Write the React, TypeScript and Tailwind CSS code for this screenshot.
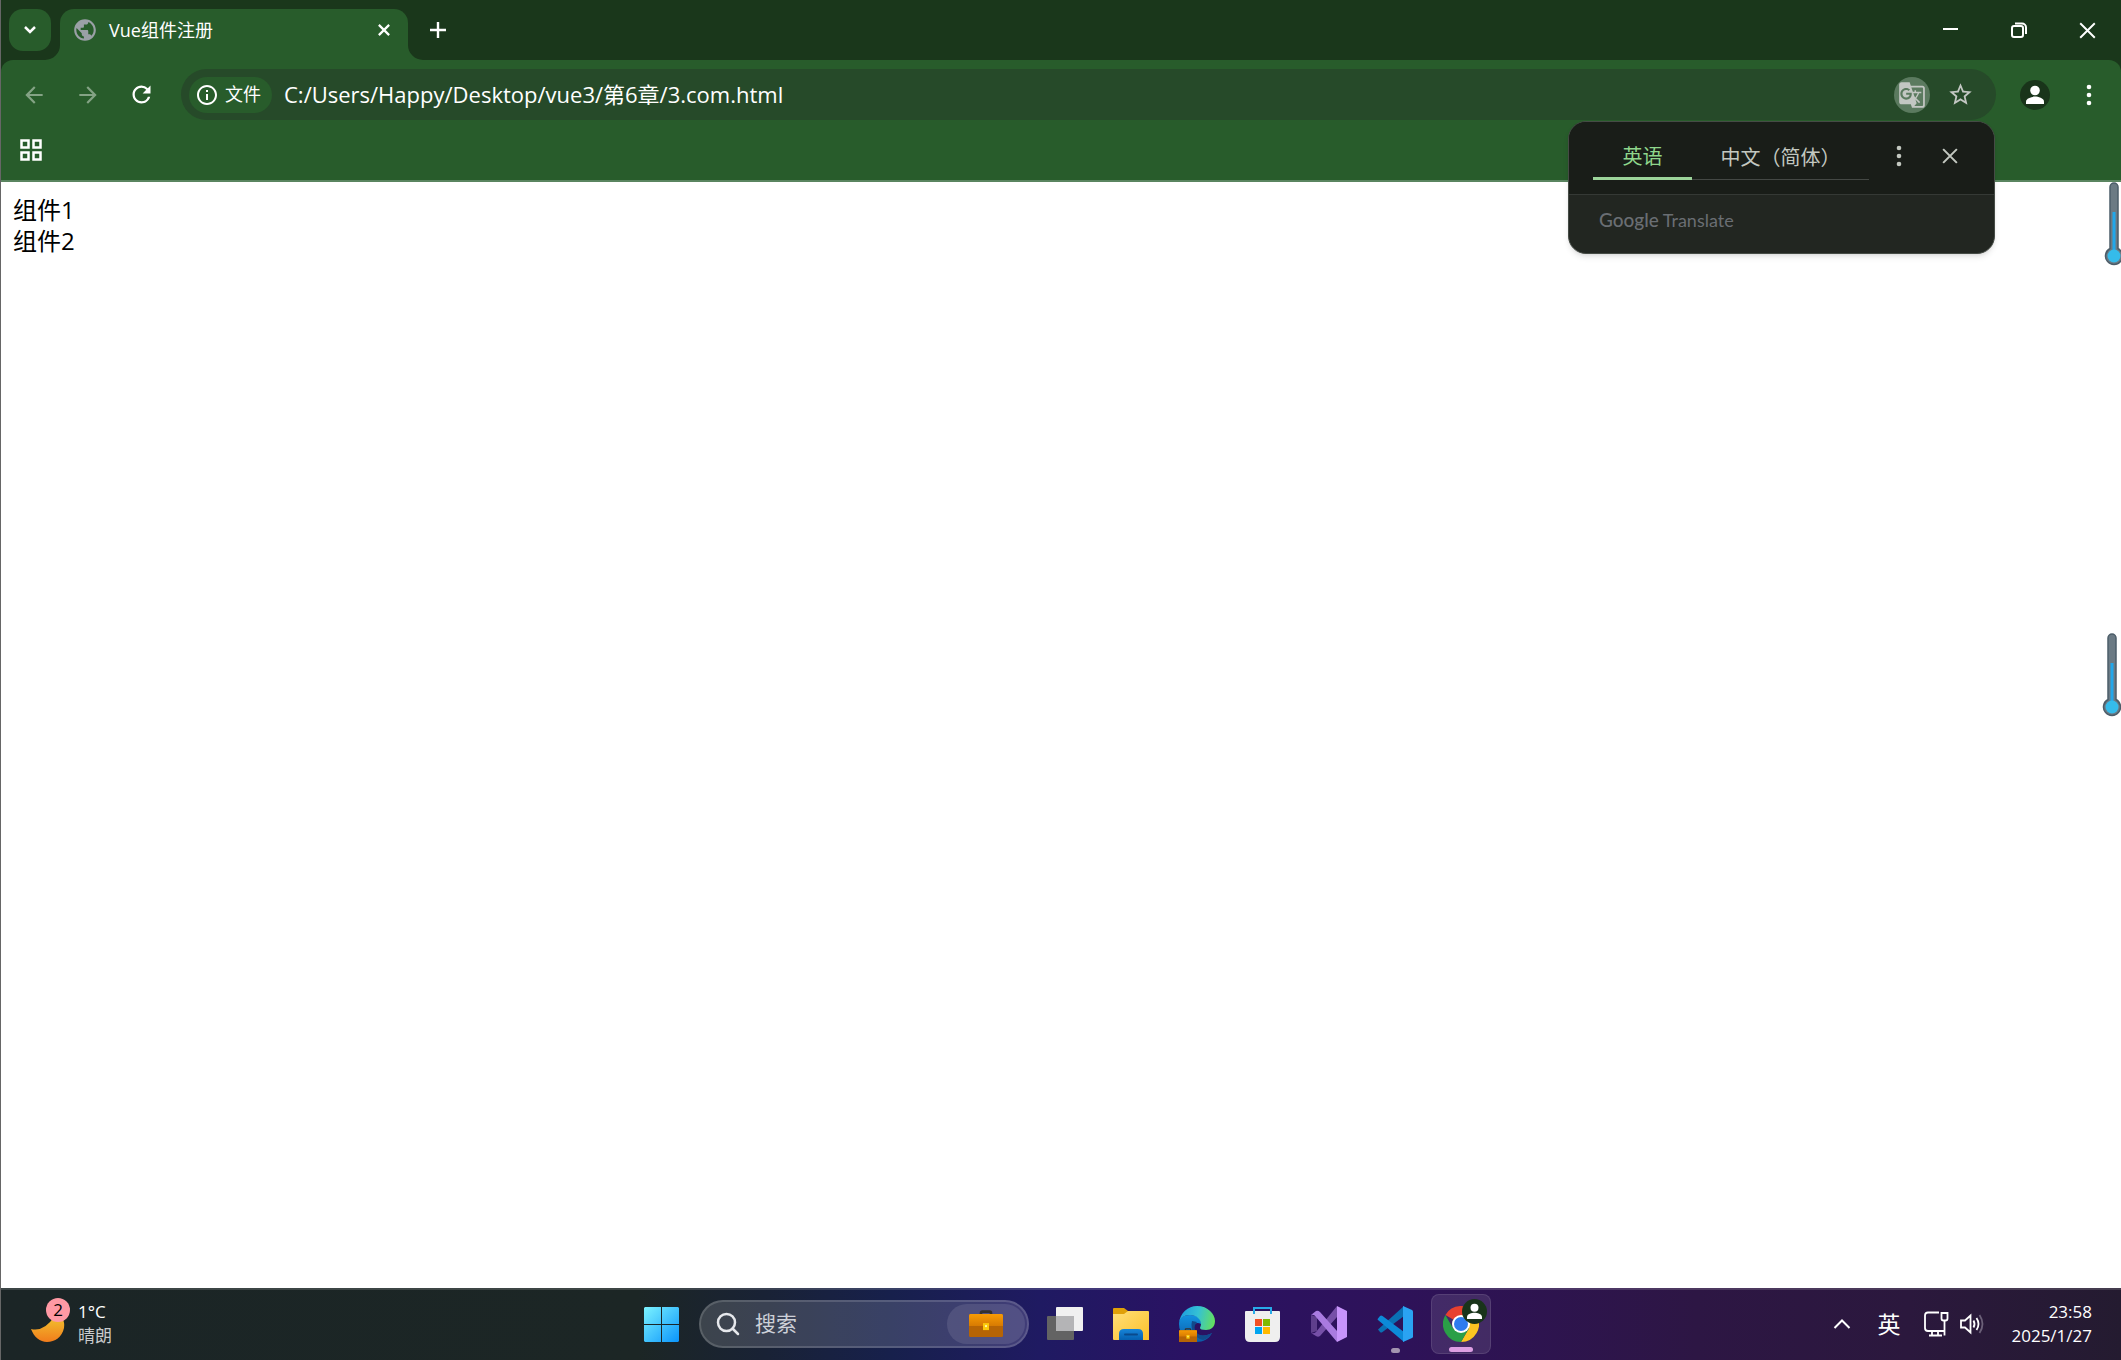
import { ReactNode } from 'react';
import {
  MdArrowBack,
  MdArrowForward,
  MdGTranslate,
  MdInfoOutline,
  MdPublic,
  MdRefresh,
  MdStarBorder,
} from 'react-icons/md';

const UI_FONT = "font-['Open_Sans','Noto_Sans_CJK_SC',sans-serif]";

// ---------- shared icons ----------

function Cross({ size, stroke }: { size: number; stroke: number }) {
  return (
    <svg width={size} height={size} viewBox="0 0 14 14" fill="none" stroke="currentColor" strokeWidth={stroke}>
      <path d="M1 1l12 12M13 1L1 13" />
    </svg>
  );
}

function Dots() {
  return (
    <svg width="6" height="22" viewBox="0 0 6 22" fill="currentColor">
      <circle cx="3" cy="3" r="2.3" />
      <circle cx="3" cy="11" r="2.3" />
      <circle cx="3" cy="19" r="2.3" />
    </svg>
  );
}

function Person({ size }: { size: number }) {
  return (
    <svg width={size} height={size} viewBox="0 0 30 30">
      <circle cx="15" cy="15" r="15" fill="#19341a" />
      <circle cx="15" cy="10.5" r="4.8" fill="#fff" />
      <path d="M6 24v-2.4c0-3.4 6-5 9-5s9 1.600 9 5V24z" fill="#fff" />
    </svg>
  );
}

function Thermometer() {
  return (
    <svg width="20" height="86" viewBox="0 0 20 86">
      <path d="M6 5a4 4 0 0 1 8 0v61.500a8.500 8.500 0 1 1-8 0z" fill="#6b7a84" stroke="#4c5d69" strokeWidth="1.500" />
      <rect x="8.500" y="30" width="3" height="40" fill="#22a7ea" />
      <circle cx="10" cy="74" r="6.500" fill="#35bbea" />
    </svg>
  );
}

// ---------- browser chrome ----------

function TabStrip() {
  return (
    <div className="flex h-[60px] shrink-0 bg-[#1a371b] pl-[8px] pt-[9px]">
      <button
        aria-label="搜索标签页"
        className="flex h-[42px] w-[42px] items-center justify-center rounded-[14px] bg-[#285c2b]"
      >
        <svg width="14" height="10" viewBox="0 0 14 10" fill="none" stroke="currentColor" strokeWidth="2.500">
          <path d="M2 2l5 5 5-5" />
        </svg>
      </button>
      <div className="relative ml-[9px] flex w-[348px] items-center rounded-t-[14px] bg-[#285c2b] pb-[9px] pl-[12px] pr-[18px]">
        <svg className="absolute bottom-0 -left-[15px]" width="15" height="15" viewBox="0 0 15 15">
          <path d="M15 0v15H0A15 15 0 0 0 15 0z" fill="#285c2b" />
        </svg>
        <svg className="absolute bottom-0 -right-[15px]" width="15" height="15" viewBox="0 0 15 15">
          <path d="M0 0v15h15A15 15 0 0 1 0 0z" fill="#285c2b" />
        </svg>
        <MdPublic size={26} className="text-[#9aa0a6]" />
        <span className="ml-[11px] flex-1 text-[18px] leading-6">Vue组件注册</span>
        <button aria-label="关闭标签页" className="flex">
          <Cross size={12} stroke={2.6} />
        </button>
      </div>
      <button aria-label="新标签页" className="ml-[15px] flex h-[42px] w-[30px] items-center justify-center">
        <svg width="16" height="16" viewBox="0 0 16 16" fill="none" stroke="currentColor" strokeWidth="2.400">
          <path d="M8 0v16M0 8h16" />
        </svg>
      </button>
      <div className="ml-auto flex h-[42px]">
        <button aria-label="最小化" className="flex w-[68px] items-center justify-center">
          <svg width="16" height="16" viewBox="0 0 16 16" stroke="currentColor" strokeWidth="2">
            <path d="M0 7h15" />
          </svg>
        </button>
        <button aria-label="还原" className="flex w-[68px] items-center justify-center">
          <svg width="16" height="16" viewBox="0 0 16 16" fill="none" stroke="currentColor" strokeWidth="2">
            <rect x="1" y="4" width="11" height="11" rx="2" />
            <path d="M4 1.500h7a4 4 0 0 1 4 4V12" />
          </svg>
        </button>
        <button aria-label="关闭" className="flex w-[68px] items-center justify-center">
          <Cross size={17} stroke={1.6} />
        </button>
      </div>
    </div>
  );
}

function Toolbar() {
  return (
    <div className="flex h-[69px] shrink-0 items-center pl-[20px] pr-[29px]">
      <button aria-label="后退" disabled className="flex w-[54px] text-[#84a385]">
        <MdArrowBack size={26} />
      </button>
      <button aria-label="前进" disabled className="flex w-[53px] text-[#84a385]">
        <MdArrowForward size={26} />
      </button>
      <button aria-label="重新加载" className="flex w-[53px]">
        <MdRefresh size={27} />
      </button>
      <div className="flex h-[51px] flex-1 items-center rounded-full bg-[#264a29] pl-2 pr-[22px]">
        <button className="flex h-9 items-center gap-[6px] rounded-full bg-[#285c2b] pl-[6px] pr-[11px] text-[18px]">
          <MdInfoOutline size={24} />
          文件
        </button>
        <input
          aria-label="地址"
          className="ml-3 min-w-0 flex-1 bg-transparent text-[22px] outline-none"
          defaultValue="C:/Users/Happy/Desktop/vue3/第6章/3.com.html"
        />
        <button
          aria-label="翻译此页"
          className="flex h-9 w-9 items-center justify-center rounded-full bg-[#5b7a5f] text-[#c3c7c3]"
        >
          <MdGTranslate size={28} />
        </button>
        <button aria-label="收藏" className="ml-[17px] flex text-[#c3c7c3]">
          <MdStarBorder size={27} />
        </button>
      </div>
      <button aria-label="用户" className="ml-6 flex">
        <Person size={30} />
      </button>
      <button aria-label="更多" className="ml-9 flex">
        <Dots />
      </button>
    </div>
  );
}

function TranslatePopup() {
  return (
    <div className="absolute right-[126px] top-[121px] z-10 w-[427px] overflow-hidden rounded-[18px] border border-[#454b45] bg-[#222621] text-[#c3c8c0] shadow-md">
      <div className="flex h-[73px] items-center border-b border-[#353935] bg-[#191d18] pb-1 pl-6 pr-[36px]">
        <div role="tablist" className="mt-1 flex w-[276px] text-[20px]">
          <button
            role="tab"
            aria-selected="true"
            className="h-11 w-[99px] border-b-[3px] border-[#9cd49a] text-[#8fd68c]"
          >
            英语
          </button>
          <button role="tab" aria-selected="false" className="h-11 flex-1 border-b border-[#444844] whitespace-nowrap">
            中文（简体）
          </button>
        </div>
        <button aria-label="选项" className="ml-auto flex">
          <Dots />
        </button>
        <button aria-label="关闭翻译" className="ml-10 flex">
          <Cross size={16} stroke={1.8} />
        </button>
      </div>
      <div className="flex h-[58px] items-center pb-2 pl-[30px] font-['Lato',sans-serif] text-[19px] text-[#6a6e73]">
        <span className="font-medium">Google</span>
        <span className="ml-1 text-[18px]">Translate</span>
      </div>
    </div>
  );
}

// ---------- taskbar ----------

function TaskButton({ label, active, mark, children }: { label: string; active?: boolean; mark?: string; children: ReactNode }) {
  return (
    <button
      aria-label={label}
      className={`relative flex h-[60px] w-[60px] items-center justify-center rounded-lg ${
        active ? 'border border-white/10 bg-white/10' : ''
      }`}
    >
      {children}
      {mark && <span className={`absolute bottom-[1px] h-[5px] rounded-full ${mark}`} />}
    </button>
  );
}

function StartLogo() {
  return (
    <svg width="35" height="35" viewBox="0 0 35 35">
      <defs>
        <linearGradient id="start" x1="0" y1="0" x2="35" y2="35" gradientUnits="userSpaceOnUse">
          <stop offset="0" stopColor="#7cf3ff" />
          <stop offset="1" stopColor="#0a94fb" />
        </linearGradient>
      </defs>
      <path d="M1 0h16v17H0V1zM18 0h16l1 1v16H18zM0 18h17v17H1l-1-1zM18 18h17v16l-1 1H18z" fill="url(#start)" />
    </svg>
  );
}

function Briefcase({ width }: { width: number }) {
  return (
    <svg width={width} height={width * 0.8} viewBox="0 0 34 27">
      <defs>
        <linearGradient id="case" x1="0" y1="0" x2="0" y2="1">
          <stop offset="0" stopColor="#f79b05" />
          <stop offset="1" stopColor="#d77a02" />
        </linearGradient>
      </defs>
      <path d="M12 5V3q0-1.500 1.500-1.500h7Q22 1.500 22 3v2" fill="none" stroke="#33312f" strokeWidth="2.600" />
      <rect y="4" width="34" height="23" rx="1.500" fill="#b66405" />
      <path d="M1.500 4h31Q34 4 34 5.500V16H0V5.500Q0 4 1.500 4z" fill="url(#case)" />
      <rect x="14" y="13" width="6" height="7" fill="#fbc90b" />
      <rect x="16" y="15" width="2" height="2" fill="#fff3a0" />
    </svg>
  );
}

function TaskViewLogo() {
  return (
    <svg width="36" height="36" viewBox="0 0 36 36">
      <rect x="0" y="10" width="27" height="24" rx="1" fill="#636363" />
      <rect x="9" y="1" width="27" height="24" rx="1" fill="#f0f0f0" />
      <rect x="9" y="10" width="18" height="15" fill="#b4b4b6" />
    </svg>
  );
}

function ExplorerLogo() {
  return (
    <svg width="36" height="36" viewBox="0 0 36 36">
      <defs>
        <linearGradient id="folder" x1="0" y1="0" x2="1" y2="1">
          <stop offset="0" stopColor="#ffdf78" />
          <stop offset="1" stopColor="#fcc02a" />
        </linearGradient>
        <linearGradient id="drawer" x1="0" y1="0" x2="0" y2="1">
          <stop offset="0" stopColor="#1784d8" />
          <stop offset="1" stopColor="#0560b0" />
        </linearGradient>
      </defs>
      <path d="M0 8V3q0-1 1-1h10l4 3v5H0z" fill="#e0a008" />
      <path d="M0 8h11l4-3h20q1 0 1 1v28H1q-1 0-1-1z" fill="url(#folder)" />
      <path d="M6 34V28q0-5 5-5h14q5 0 5 5v6z" fill="url(#drawer)" />
      <rect x="11" y="27.500" width="14" height="2" rx="1" fill="#0a4a8c" />
    </svg>
  );
}

function EdgeLogo() {
  return (
    <div className="relative">
      <svg width="36" height="36" viewBox="0 0 36 36">
        <defs>
          <linearGradient id="edgeTop" x1="0" y1="8" x2="36" y2="16" gradientUnits="userSpaceOnUse">
            <stop offset="0" stopColor="#1c9be0" />
            <stop offset="0.500" stopColor="#35c1d4" />
            <stop offset="1" stopColor="#66e05a" />
          </linearGradient>
          <linearGradient id="edgeLeft" x1="0" y1="10" x2="0" y2="36" gradientUnits="userSpaceOnUse">
            <stop offset="0" stopColor="#1290df" />
            <stop offset="1" stopColor="#0c59a4" />
          </linearGradient>
        </defs>
        <path d="M0 18C0 12 5 9 11 9c7 0 12 4 11 9-6-3-9 2-7 7 3 6 11 6 18 2-3 6-9 9-15 9C8 36 0 28 0 18z" fill="url(#edgeLeft)" />
        <path d="M13 15c-2 8 2 17 11 19 4-1 7-4 9-7-7 4-15 3-17-3-1-3 0-6 2-8z" fill="#114a8b" />
        <path d="M0 17C1 7 9 0 18 0c11 0 18 8 18 15 0 6-4 9-9 9-4 0-6-1-6-2 0-1 1-2 1-4 0-5-5-9-11-9C5 9 1 12 0 17z" fill="url(#edgeTop)" />
      </svg>
      <span className="absolute bottom-0 left-0">
        <Briefcase width={18} />
      </span>
    </div>
  );
}

function StoreLogo() {
  return (
    <svg width="36" height="36" viewBox="0 0 36 36">
      <path d="M0 6q0-1 1-1h33q1 0 1 1v25q0 5-5 5H5q-5 0-5-5z" fill="#efefef" />
      <path d="M9 8V2h17v6" fill="none" stroke="#28abe8" strokeWidth="2" />
      <rect x="10" y="13" width="7" height="7" fill="#f25022" />
      <rect x="18" y="13" width="7" height="7" fill="#7fba00" />
      <rect x="10" y="21" width="7" height="7" fill="#00a4ef" />
      <rect x="18" y="21" width="7" height="7" fill="#ffb900" />
    </svg>
  );
}

function VisualStudioLogo() {
  return (
    <svg width="36" height="36" viewBox="0 0 36 36">
      <path d="M0 9l6 2v14l-6 2z" fill="#5f3f8c" />
      <path d="M26 0v11L9 30q-2 1.500-4 0l-5-3q3 1 5-1z" fill="#7650a8" />
      <path d="M0 9l5-4q2-1 4 1l17 19v11L5 11Q3 8 0 9z" fill="#a97be0" />
      <path d="M26 0l10 5v26l-10 5z" fill="#c794fb" />
    </svg>
  );
}

function CodeLogo() {
  return (
    <svg width="36" height="36" viewBox="0 0 36 36">
      <path d="M1 23.500l2 2.500q1 1 2.500 0L27 10V0z" fill="#0a70b4" />
      <path d="M1 12.500L3 10q1-1 2.500 0L27 26v10L1 14q-1-1 0-1.500z" fill="#0c8ad8" />
      <path d="M26 0l9 4q1 .5 1 1.500v25q0 1-1 1.500l-9 4z" fill="#2aa3f2" />
    </svg>
  );
}

function ChromeLogo() {
  return (
    <div className="relative">
      <svg width="36" height="36" viewBox="0 0 36 36">
        <path d="M18 18L2.400 9A18 18 0 0 1 33.600 9z" fill="#e8402f" />
        <path d="M18 9h15.600A18 18 0 0 1 18 36l7.800-13.500z" fill="#fcc521" />
        <path d="M10.200 22.500L2.400 9A18 18 0 0 0 18 36l7.800-13.500z" fill="#2a9f47" />
        <circle cx="18" cy="18" r="9" fill="#fff" />
        <circle cx="18" cy="18" r="7" fill="#2e7bee" />
      </svg>
      <span className="absolute -right-2 -top-[7px]">
        <Person size={25} />
      </span>
    </div>
  );
}

function Weather() {
  return (
    <button className="flex w-fit items-center gap-[13px] pl-[30px] text-left text-[17px] leading-6">
      <span className="relative flex h-[52px] w-[34px] items-end pb-2">
        <svg width="34" height="26" viewBox="0 0 34 26">
          <defs>
            <linearGradient id="moon" x1="0" y1="0" x2="0" y2="1">
              <stop offset="0" stopColor="#f2c12e" />
              <stop offset="1" stopColor="#f17c1c" />
            </linearGradient>
          </defs>
          <path d="M0 13q13 3 23-12h8q3 6 2 11c-2 9-9 14-17 14C9 26 3 21 0 13z" fill="url(#moon)" />
        </svg>
        <span className="absolute -right-[5px] top-0 flex h-6 w-6 items-center justify-center rounded-full bg-[#ff99a4] text-[17px] leading-6 text-black">
          2
        </span>
      </span>
      <span>
        <span className="block">1°C</span>
        <span className="block text-[#c9cbcc]">晴朗</span>
      </span>
    </button>
  );
}

function Tray() {
  return (
    <div className="flex items-center justify-end pr-[29px]">
      <button aria-label="显示隐藏的图标" className="flex">
        <svg width="18" height="12" viewBox="0 0 18 12" fill="none" stroke="currentColor" strokeWidth="2">
          <path d="M1.500 10L9 2.500l7.500 7.500" />
        </svg>
      </button>
      <button className="ml-[26px] text-[23px]">英</button>
      <button aria-label="网络和音量" className="ml-6 flex gap-[11px]">
        <svg width="25" height="26" viewBox="0 0 25 26" fill="none" stroke="currentColor" strokeWidth="1.800">
          <path d="M15 1.500H4q-3 0-3 3V17q0 3 3 3h16" />
          <path d="M8 20v4M14 20v4M5 24.500h13" />
          <path d="M17.500 2h6v5.500q0 2-2 2h-2q-2 0-2-2z" />
          <path d="M20.500 10v14.500" />
        </svg>
        <svg width="25" height="26" viewBox="0 0 25 26" fill="none" stroke="currentColor" strokeWidth="1.800">
          <path d="M1 9.500h4l5.500-5v17l-5.500-5H1z" />
          <path d="M13.500 9.500q2 3.500 0 7M16.500 7q4 6 0 12" />
          <path d="M19.500 4q6 9 0 18" stroke="#6b6078" />
        </svg>
      </button>
      <button className="ml-[26px] text-right text-[17px] leading-6">
        <time className="block">23:58</time>
        <time className="block">2025/1/27</time>
      </button>
    </div>
  );
}

function Taskbar() {
  return (
    <footer className="grid h-[72px] shrink-0 grid-cols-[1fr_auto_1fr] items-center border-t-2 border-white/15 bg-[linear-gradient(90deg,#1b2526_0%,#1c2625_30%,#192235_36%,#17204c_42%,#1f1a62_49%,#2a1263_56%,#2e1259_66%,#2d1644_80%,#2b183d_90%,#241b30_100%)] bg-origin-border pb-[2px]">
      <Weather />
      <div className="flex items-center gap-[6px]">
        <TaskButton label="开始">
          <StartLogo />
        </TaskButton>
        <label className="ml-[2px] flex h-12 w-[330px] items-center rounded-full border-2 border-white/15 bg-white/15 pl-[15px] pr-[2px]">
          <svg width="24" height="24" viewBox="0 0 24 24" fill="none" stroke="#e6e8ec" strokeWidth="2.500">
            <circle cx="10.500" cy="10.500" r="8.500" />
            <path d="M16.500 16.500L22 22" strokeLinecap="round" />
          </svg>
          <input
            aria-label="搜索"
            placeholder="搜索"
            className="ml-[15px] min-w-0 flex-1 bg-transparent text-[21px] outline-none placeholder:text-[#cdd0d8]"
          />
          <span className="flex h-10 w-[78px] items-center justify-center rounded-full bg-white/10">
            <Briefcase width={34} />
          </span>
        </label>
        <TaskButton label="任务视图">
          <TaskViewLogo />
        </TaskButton>
        <TaskButton label="文件资源管理器">
          <ExplorerLogo />
        </TaskButton>
        <TaskButton label="Edge">
          <EdgeLogo />
        </TaskButton>
        <TaskButton label="Microsoft Store">
          <StoreLogo />
        </TaskButton>
        <TaskButton label="Visual Studio">
          <VisualStudioLogo />
        </TaskButton>
        <TaskButton label="Visual Studio Code" mark="w-[9px] bg-[#a394b0]">
          <CodeLogo />
        </TaskButton>
        <TaskButton label="Chrome" active mark="w-6 bg-[#dd9fe3]">
          <ChromeLogo />
        </TaskButton>
      </div>
      <Tray />
    </footer>
  );
}

export default function App() {
  return (
    <div className={`relative flex h-screen flex-col overflow-hidden border-l border-[#666666] bg-white text-white ${UI_FONT}`}>
      <header className="bg-[#1a371b]">
        <TabStrip />
        <div className="rounded-t-xl border-b-2 border-[#5a8560] bg-[#285c2b]">
          <Toolbar />
          <div className="flex h-[51px] items-start pl-[19px] pt-[10px]">
            <button aria-label="应用" className="flex">
              <svg width="22" height="22" viewBox="0 0 22 22" fill="none" stroke="currentColor" strokeWidth="2.500">
                <path d="M1.500 1.500h7v7h-7zM13.500 1.500h7v7h-7zM1.500 13.500h7v7h-7zM13.500 13.500h7v7h-7z" />
              </svg>
            </button>
          </div>
        </div>
      </header>
      <TranslatePopup />
      <main className="relative flex-1 p-3 text-[24px] leading-[31px] text-black">
        <div>组件1</div>
        <div>组件2</div>
        {/* desktop widgets floating over the right edge */}
        <div className="absolute -right-[3px] top-0">
          <Thermometer />
        </div>
        <div className="absolute -right-[1px] top-[451px]">
          <Thermometer />
        </div>
      </main>
      <Taskbar />
    </div>
  );
}
